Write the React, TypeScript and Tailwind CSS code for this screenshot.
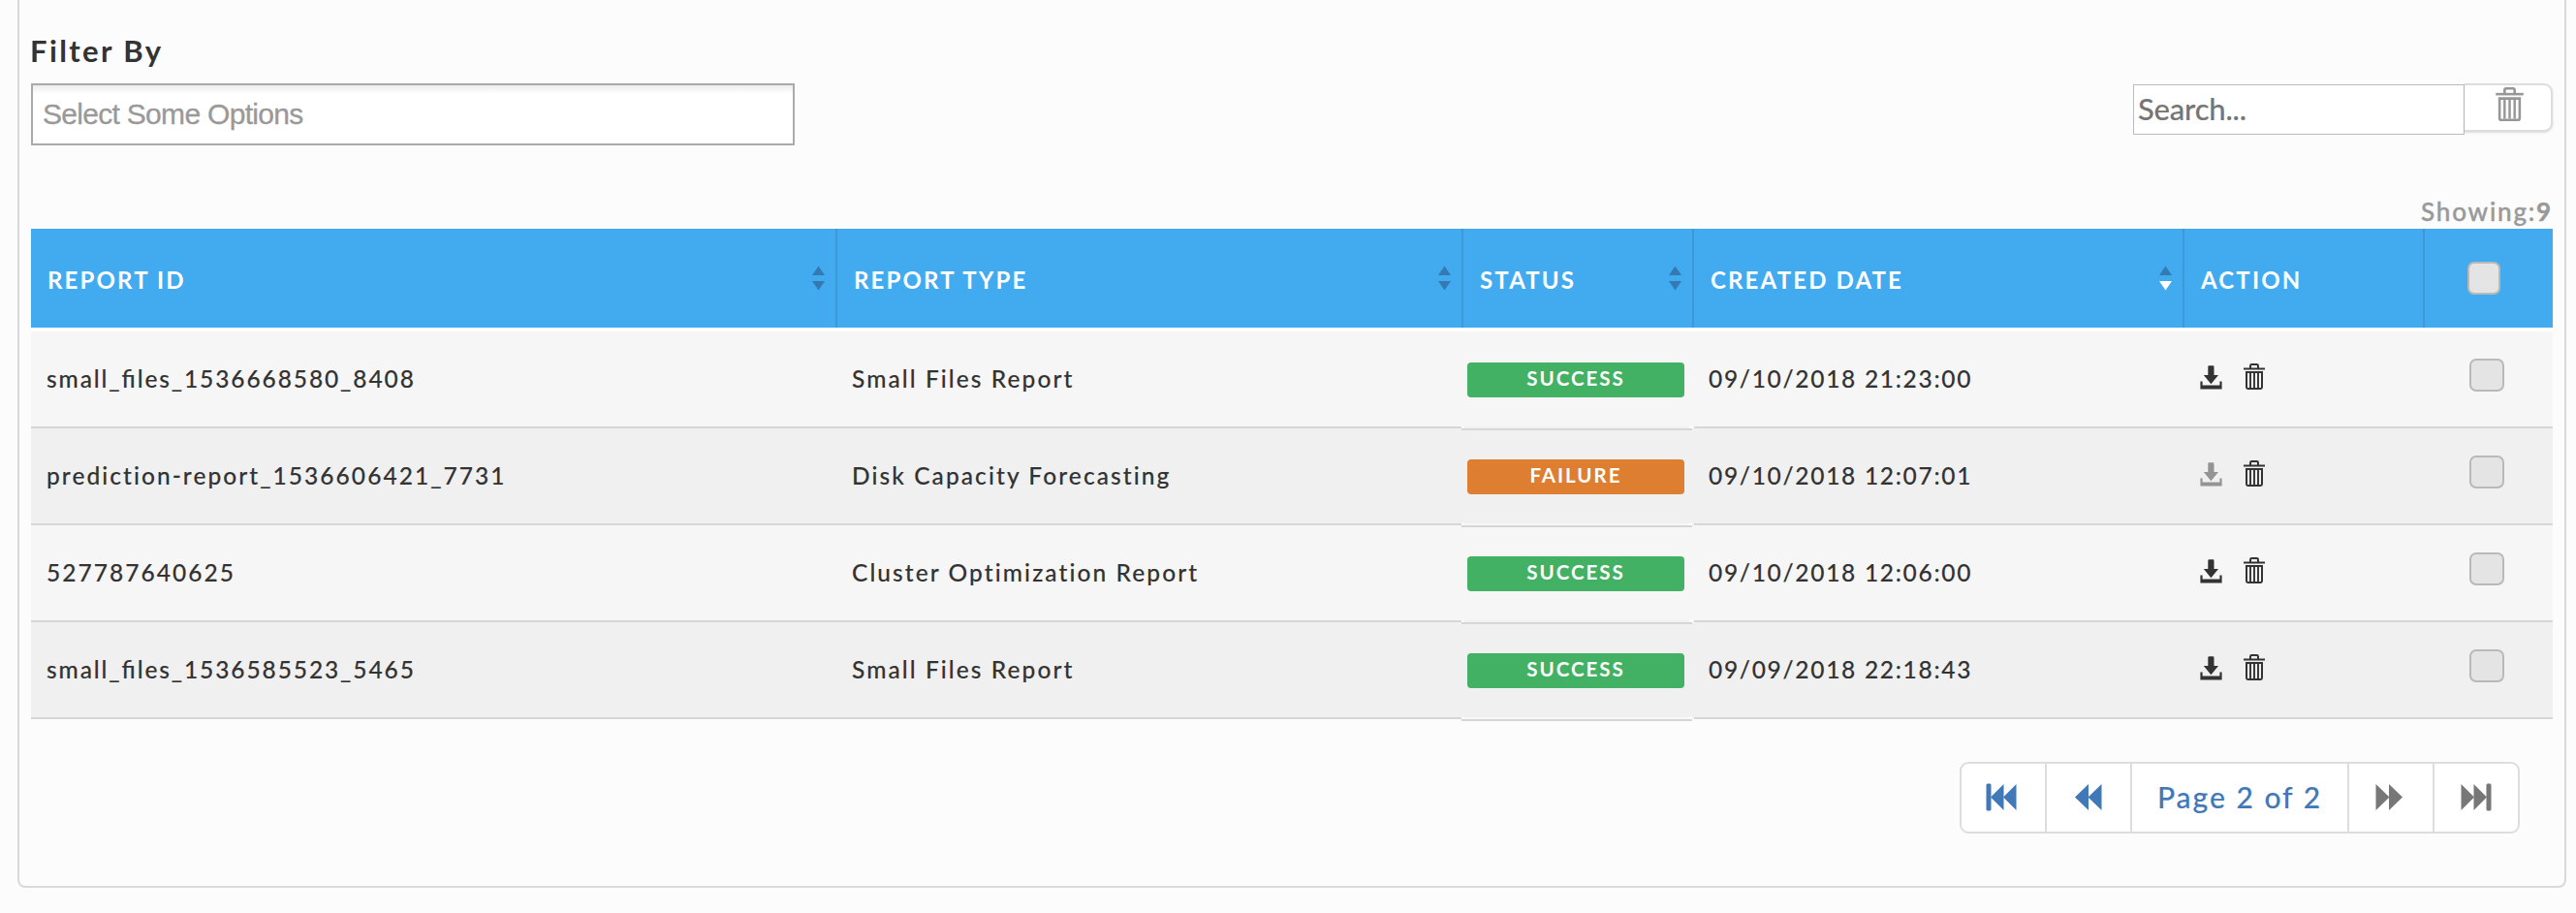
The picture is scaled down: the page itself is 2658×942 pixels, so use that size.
import type { ReactNode } from "react";

function TrashIcon({ className }: { className: string }) {
  return (
    <svg viewBox="0 0 22 27" className={className} fill="none" stroke="currentColor">
      <path d="M0 5.5H22" strokeWidth="2" />
      <path d="M7 5V2.4Q7 1 8.4 1H13.6Q15 1 15 2.4V5" strokeWidth="2" />
      <path d="M3 9H19V24.6Q19 26 17.6 26H4.4Q3 26 3 24.6Z" strokeWidth="2" />
      <path d="M7 9V25M11 9V25M15 9V25" strokeWidth="1.9" />
    </svg>
  );
}

function DownloadIcon({ className }: { className: string }) {
  return (
    <svg viewBox="0 0 23 25" className={className} fill="currentColor">
      <path d="M8.3 1.4Q8.3.3 9.4.3H13.4Q14.5.3 14.5 1.4V10H19L11.4 19.2L3.8 10H8.3Z" />
      <path d="M.4 16.6H2.6V20.6H20.4V16.6H22.6V24.6H.4Z" />
    </svg>
  );
}

function Sort({ active = false }: { active?: boolean }) {
  return (
    <svg viewBox="0 0 13 26" className="h-[26px] w-[13px] shrink-0">
      <path d="M6.5 .5L13 10H0Z" fill="#337ab2" />
      <path d="M0 16H13L6.5 25.5Z" fill={active ? "#fff" : "#337ab2"} />
    </svg>
  );
}

function Check({ className }: { className: string }) {
  return <span className={`block h-[34px] rounded-[7px] border-2 border-[#b9b9b9] bg-[#e4e4e4] ${className}`} />;
}

function Head({ label, sort, children }: { label?: string; sort?: ReactNode; children?: ReactNode }) {
  return (
    <div
      className={`flex h-[102px] items-center justify-between pr-[11px] pl-[17px] text-[24px] font-bold tracking-[2.15px] text-white [-webkit-text-stroke:0] ${
        label ? "border-r-2 border-[#3c99d5]" : ""
      }`}
    >
      {label && <span className="pt-1">{label}</span>}
      {sort}
      {children}
    </div>
  );
}

const columns = "grid grid-cols-[832px_646px_238px_506px_248px_132px]";

const rows = [
  { id: "small_files_1536668580_8408", fi: true, type: "Small Files Report", ok: true, date: "09/10/2018 21:23:00" },
  { id: "prediction-report_1536606421_7731", fi: false, type: "Disk Capacity Forecasting", ok: false, date: "09/10/2018 12:07:01" },
  { id: "527787640625", fi: false, type: "Cluster Optimization Report", ok: true, date: "09/10/2018 12:06:00" },
  { id: "small_files_1536585523_5465", fi: true, type: "Small Files Report", ok: true, date: "09/09/2018 22:18:43" },
];

function Row({ row, odd }: { row: (typeof rows)[number]; odd: boolean }) {
  const cell = "flex h-[100px] items-center border-b-2 border-[#d6d6d6]";
  return (
    <div className={`${columns} ${odd ? "bg-[#f0f0f0]" : "bg-[#f6f6f6]"}`}>
      <div className={`${cell} pl-4 ${row.fi ? "tracking-[1.9px] [font-feature-settings:'liga'_1]" : "tracking-[2.05px]"}`}>{row.id}</div>
      <div className={`${cell} pl-[15px] tracking-[2.08px]`}>{row.type}</div>
      <div className={`relative -ml-0.5 h-[100px] w-[238px] pt-8 pl-1.5 ${odd ? "bg-[#f0f0f0]" : "bg-[#f6f6f6]"}`}>
        <div
          className={`flex h-9 w-[224px] justify-center rounded-[4px] text-[20.5px] leading-[33px] font-bold tracking-[2px] text-white [-webkit-text-stroke:0] ${
            row.ok ? "bg-[#42b163]" : "bg-[#de7e31]"
          }`}
        >
          {row.ok ? "SUCCESS" : "FAILURE"}
        </div>
        <svg viewBox="0 0 238 5" className="absolute top-[97px] left-0 z-10 h-[5px] w-[238px]">
          <rect y="1" width="238" height="2" fill={odd ? "#f7f7f7" : "#f1f1f1"} />
          <path d="M0 0L4 2L0 3ZM238 0L234 2L238 3Z" fill="#fff" />
          <rect y="3" width="238" height="2" fill="#d6d6d6" />
        </svg>
      </div>
      <div className={`${cell} pl-[15px] tracking-[1.7px]`}>{row.date}</div>
      <div className={`${cell} gap-[22px] pb-[5px] pl-4`}>
        <DownloadIcon className={`mt-0.5 h-[25px] w-[23px] ${row.ok ? "text-[#333]" : "text-[#949494]"}`} />
        <TrashIcon className="h-[27px] w-[22px] text-[#333]" />
      </div>
      <div className={`${cell} pb-2 pl-[46px]`}>
        <Check className="w-9" />
      </div>
    </div>
  );
}

function DoubleArrow({ end, flip, className = "" }: { end?: boolean; flip?: boolean; className?: string }) {
  return (
    <svg viewBox="0 0 32 29" className={`h-[29px] w-8 ${flip ? "-scale-x-100" : ""} ${className}`} fill="currentColor">
      {end && <rect x="0.5" y="0.5" width="5" height="28" rx="1.5" />}
      <path d={end ? "M5 14.5L18.5 1V28Z" : "M2 14.5L16 1V28Z"} />
      <path d={end ? "M18 14.5L31.5 1V28Z" : "M15.5 14.5L29.5 1V28Z"} />
    </svg>
  );
}

export default function App() {
  return (
    <div className="h-[942px] w-[2658px] overflow-hidden bg-[#fcfcfc] pl-[18px] font-['Lato',sans-serif] text-[24.5px] font-medium tracking-[2px] text-[#333] [-webkit-text-stroke:0.12px]">
      <div className="h-[916px] w-[2630px] rounded-b-[8px] border-2 border-t-0 border-[#d9d9d9] px-3">
        <div className="flex h-[236px] justify-between">
          <div className="pt-[30px]">
            <div className="-ml-px h-14 text-[31px] leading-[44px] font-bold tracking-[2.4px] [-webkit-text-stroke:0]">Filter By</div>
            <div className="flex h-16 w-[788px] items-center border-2 border-[#aaa] bg-white bg-[linear-gradient(#eee_1%,#fff_15%)] pb-0.5 pl-[10px] font-['Liberation_Sans',sans-serif] text-[30px] font-normal tracking-[-0.7px] text-[#999] [-webkit-text-stroke:0.3px]">
              Select Some Options
            </div>
          </div>
          <div className="flex flex-col items-end pt-[86px]">
            <div className="flex h-[114px] items-start">
              <div className="mt-px flex h-[52px] w-[342px] items-center border border-[#bbb] bg-white pb-px pl-1 text-[31px] tracking-[-0.2px] text-[#757575]">
                Search...
              </div>
              <div className="flex h-[50px] w-[91px] items-start justify-center rounded-r-[9px] border-2 border-l-0 border-[#ddd] bg-white pt-[2px] pl-1 shadow-sm">
                <TrashIcon className="h-[35px] w-[29px] text-[#979797]" />
              </div>
            </div>
            <div className="text-[26px] leading-[36px] tracking-[1.8px] text-[#999] [-webkit-text-stroke:0.4px]">
              Showing:<b>9</b>
            </div>
          </div>
        </div>
        <div className={`${columns} mb-1 bg-[#42aaee] shadow-[0_4px_0_#fff]`}>
          <Head label="REPORT ID" sort={<Sort />} />
          <Head label="REPORT TYPE" sort={<Sort />} />
          <Head label="STATUS" sort={<Sort />} />
          <Head label="CREATED DATE" sort={<Sort active />} />
          <Head label="ACTION" />
          <Head>
            <Check className="ml-[27px] w-[34px]" />
          </Head>
        </div>
        {rows.map((row, i) => (
          <Row key={row.id} row={row} odd={i % 2 === 1} />
        ))}
        <div className="flex justify-end pt-11 pr-[34px]">
          <div className="flex h-[74px] divide-x-2 divide-[#ddd] rounded-[9px] border-2 border-[#ddd] bg-white text-[#4178b8]">
            <div className="flex w-[88px] items-center justify-center pr-1 pb-0.5"><DoubleArrow end /></div>
            <div className="flex w-[88px] items-center justify-center pb-0.5"><DoubleArrow /></div>
            <div className="flex w-[224px] items-center justify-center pb-0.5 text-[30px]">Page 2 of 2</div>
            <div className="flex w-[88px] items-center justify-center pr-1 pb-0.5"><DoubleArrow flip className="text-[#777]" /></div>
            <div className="flex w-[86px] items-center justify-center pb-0.5"><DoubleArrow end flip className="text-[#777]" /></div>
          </div>
        </div>
      </div>
    </div>
  );
}
